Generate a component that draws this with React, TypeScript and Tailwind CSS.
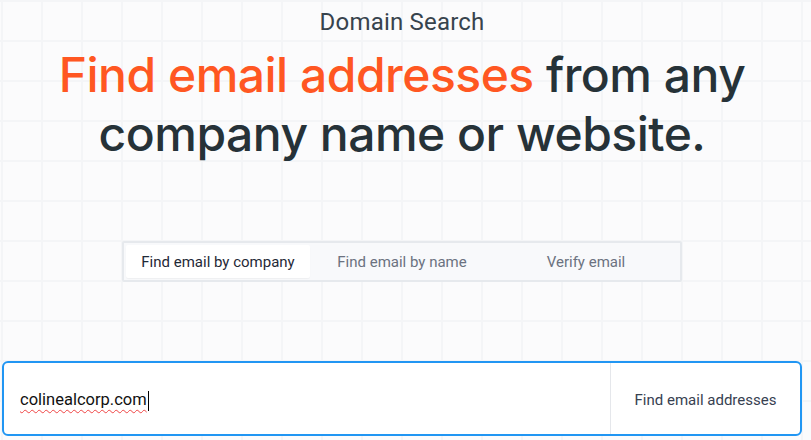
export default function App() {
  const tabs = ["Find email by company", "Find email by name", "Verify email"];

  return (
    <div className="min-h-[440px] w-full overflow-hidden bg-[#fbfbfc] bg-[linear-gradient(to_right,#f4f5f7_2px,transparent_2px),linear-gradient(to_bottom,#f4f5f7_2px,transparent_2px)] bg-[size:40px_40px] bg-[position:1px_0px] font-['Roboto',sans-serif]">
      <div className="ml-[2px] flex w-[800px] flex-col items-center pt-[7px]">
        <p className="text-[24px] leading-[30px] tracking-[0.2px] text-[#37434d]">Domain Search</p>

        <h1 className="mt-[8px] text-center font-['Inter',sans-serif] text-[48px] font-medium leading-[59px] tracking-[-0.5px] text-[#263238]">
          <span className="text-[#ff5722]">Find email addresses</span> from any
          <br />
          company name or website.
        </h1>

        <div className="mt-[78px] grid w-[560px] grid-cols-3 rounded-[2px] border-2 border-[#e6e9ed] bg-[#f8f9fb] p-[2px]">
          {tabs.map((tab, i) => (
            <button
              key={tab}
              type="button"
              className={
                i === 0
                  ? "h-[33px] rounded-[2px] pt-[2px] bg-white text-[15px] text-[#1f2937] shadow-[0_1px_1px_rgba(0,0,0,0.04)]"
                  : "h-[33px] pt-[2px] text-[15px] text-[#6b7280]"
              }
            >
              {tab}
            </button>
          ))}
        </div>
      </div>

      <div className="mt-[79px] ml-[2px] flex h-[75px] w-[800px] rounded-[6px] border-2 border-[#2196f3] bg-white pt-[4px]">
        <div className="flex flex-1 items-center pl-[16px] text-[16.5px] text-[#111]">
          <span className="underline decoration-[#ef4444] decoration-wavy decoration-[1px] underline-offset-[4px]">
            colinealcorp.com
          </span>
          <span className="ml-[1px] h-[20px] w-[1px] bg-black" />
        </div>
        <button
          type="button"
          className="-mt-[4px] w-[190px] border-l border-[#e5e7eb] pt-[4px] text-[15px] text-[#374151]"
        >
          Find email addresses
        </button>
      </div>
    </div>
  );
}
